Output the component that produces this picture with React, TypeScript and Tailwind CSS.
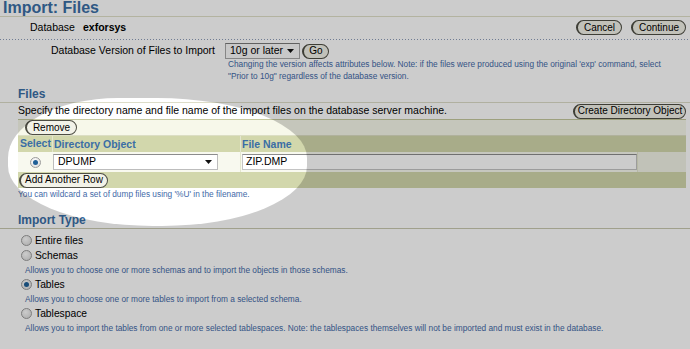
import type { ReactNode } from "react";
import clsx from "clsx";

function Btn({ children, className }: { children: ReactNode; className?: string }) {
  return (
    <span
      className={clsx(
        "inline-flex h-[15px] shrink-0 items-center justify-center rounded-full border border-[#4e4e44] border-l-2 bg-[#f2f2e8] text-[10px] leading-none text-black",
        className
      )}
    >
      {children}
    </span>
  );
}

function Radio({ checked }: { checked?: boolean }) {
  return (
    <span className="inline-flex h-[11px] w-[11px] shrink-0 items-center justify-center rounded-full border border-[#9c9c9c] bg-[radial-gradient(circle_at_40%_35%,#ffffff,#d6d6d6)]">
      {checked && <span className="h-[5px] w-[5px] rounded-full bg-[#1f5f97]" />}
    </span>
  );
}

function Arrow() {
  return (
    <svg width="7" height="4" viewBox="0 0 7 4" className="shrink-0">
      <path d="M0 0h7L3.5 4z" fill="#111" />
    </svg>
  );
}

function TypeOption({ label, desc, checked }: { label: string; desc?: string; checked?: boolean }) {
  return (
    <div>
      <div className="flex h-[15px] items-center gap-[3px] pl-[21px] text-[10.3px]">
        <Radio checked={checked} />
        <span>{label}</span>
      </div>
      {desc && (
        <div className="h-[14px] pl-[25px] text-[8.3px] leading-[14px] text-[#3f6aa8]">{desc}</div>
      )}
    </div>
  );
}

export default function App() {
  return (
    <div className="relative h-[349px] w-[690px] overflow-hidden bg-white font-['Liberation_Sans',Arial,sans-serif] text-black">
      {/* page header */}
      <div className="h-[17px] border-b border-[#e0e0c8] pl-[3px] text-[16px] font-bold leading-[16px] text-[#3a6ea5]">
        Import: Files
      </div>
      <div className="flex h-[21px] items-center text-[10.5px]">
        <span className="ml-[30px]">Database</span>
        <span className="ml-[8px] font-bold">exforsys</span>
        <div className="ml-auto mr-[4px] flex gap-[9px]">
          <Btn className="w-[46px]">Cancel</Btn>
          <Btn className="w-[55px]">Continue</Btn>
        </div>
      </div>
      <div className="mt-[1px] h-px bg-[image:repeating-linear-gradient(90deg,#8c9cb8_0_1px,transparent_1px_3px)]" />

      {/* version */}
      <div className="mt-[3px] flex h-[16px] items-center">
        <span className="w-[215px] text-right text-[10.5px]">Database Version of Files to Import</span>
        <span className="ml-[10px] flex h-[16px] w-[75px] items-center justify-between border border-[#a8a8a8] border-t-[#7a7a7a] bg-[#fafafa] pl-[4px] pr-[5px] text-[10.5px]">
          10g or later
          <Arrow />
        </span>
        <Btn className="ml-[2px] w-[27px] bg-[#eef0dc]">Go</Btn>
      </div>
      <div className="-mt-[1px] pl-[228px] text-[8.3px] leading-[12px] text-[#3f6aa8]">
        <div>
          Changing the version affects attributes below. Note: if the files were produced using the original 'exp'
          command, select
        </div>
        <div>"Prior to 10g" regardless of the database version.</div>
      </div>

      {/* files */}
      <div className="mt-[6px] h-[15px] border-b border-[#dcdcc8] pl-[18px] text-[12px] font-bold leading-[13px] text-[#3a6ea5]">
        Files
      </div>
      <div className="flex h-[16px] items-center pl-[18px] text-[10.5px]">
        <span>Specify the directory name and file name of the import files on the database server machine.</span>
        <Btn className="ml-auto mr-[4px] w-[113px]">Create Directory Object</Btn>
      </div>
      <div className="ml-[18px] w-[668px] border-t border-[#c5c89e]">
        <div className="flex h-[16px] items-center border-b border-[#dcdec4] bg-[#f7f8ea] pl-[7px]">
          <Btn className="w-[52px]">Remove</Btn>
        </div>
        <div className="flex h-[16px] items-center bg-[#d2d7ac] text-[10.5px] font-bold text-[#3a6ea5]">
          <span className="w-[34px] pl-[2px]">Select</span>
          <span className="h-full w-[188px] border-l border-[#e4e6cf] pl-[1px] leading-[16px]">Directory Object</span>
          <span className="h-full flex-1 border-l border-[#e4e6cf] pl-[1px] leading-[16px]">File Name</span>
        </div>
        <div className="flex h-[20px] items-center bg-[#f8f9ef] text-[10.5px]">
          <span className="flex w-[34px] justify-center pl-[1px]">
            <Radio checked />
          </span>
          <span className="flex w-[188px] pl-[1px]">
            <span className="flex h-[16px] w-[165px] items-center justify-between border border-[#bdbdbd] border-t-[#8c8c8c] bg-white pl-[4px] pr-[5px]">
              DPUMP
              <Arrow />
            </span>
          </span>
          <span className="flex h-full w-[397px] items-center border-l border-[#e4e6cf] pl-[1px]">
            <span className="flex h-[16px] w-[395px] items-center border border-[#c4c4c4] border-t-[#8c8c8c] bg-white pl-[3px]">
              ZIP.DMP
            </span>
          </span>
          <span className="h-full flex-1 border-l border-[#e4e6cf] bg-[#f2f3e6]" />
        </div>
        <div className="flex h-[16px] items-center bg-[#d2d7ac] pl-[1px]">
          <Btn className="w-[89px]">Add Another Row</Btn>
        </div>
      </div>
      <div className="h-[12px] pl-[18px] text-[8.3px] leading-[12px] text-[#3f6aa8]">
        You can wildcard a set of dump files using '%U' in the filename.
      </div>

      {/* import type */}
      <div className="mt-[13px] h-[16px] border-b border-[#c8c8b0] pl-[18px] text-[12px] font-bold leading-[14px] text-[#3a6ea5]">
        Import Type
      </div>
      <div className="mt-[4px]">
        <TypeOption label="Entire files" />
        <TypeOption label="Schemas" desc="Allows you to choose one or more schemas and to import the objects in those schemas." />
        <TypeOption checked label="Tables" desc="Allows you to choose one or more tables to import from a selected schema." />
        <TypeOption
          label="Tablespace"
          desc="Allows you to import the tables from one or more selected tablespaces. Note: the tablespaces themselves will not be imported and must exist in the database."
        />
      </div>

      {/* spotlight overlay: dims everything outside the highlighted shape */}
      <div className="pointer-events-none absolute left-[8px] top-[98px] h-[128px] w-[299px] rounded-[110px_150px_145px_145px/60px_60px_60px_60px] shadow-[0_0_0_800px_rgba(0,0,0,0.2)]" />
    </div>
  );
}
